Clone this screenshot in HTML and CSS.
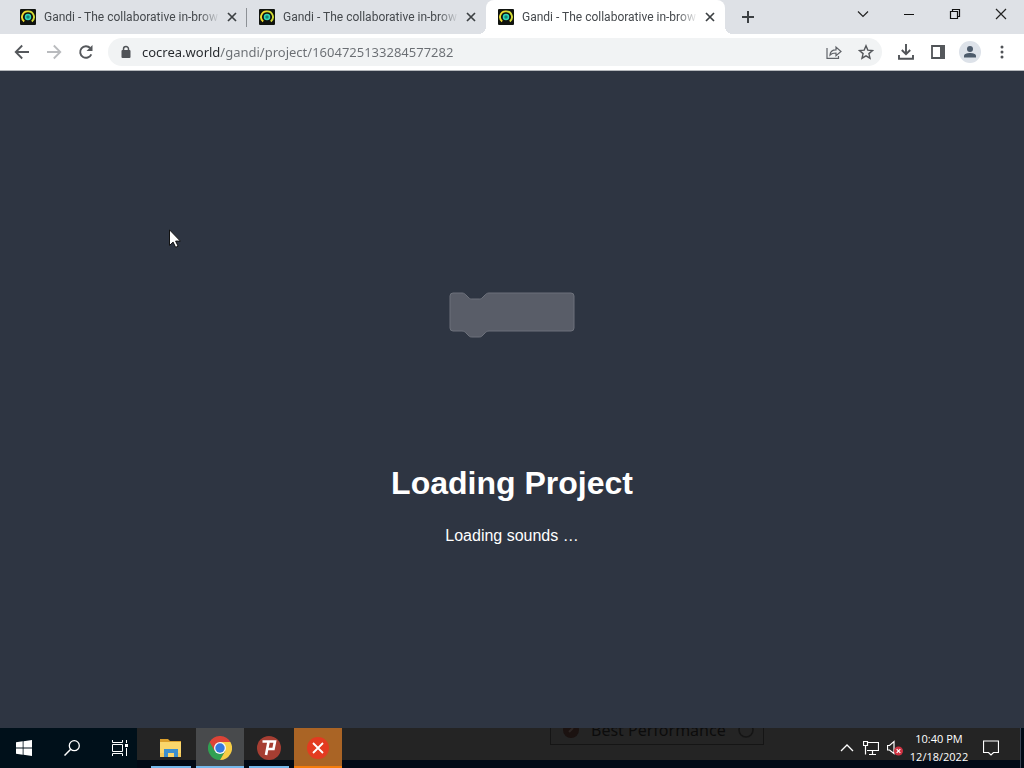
FILE: index.html
```html
<!DOCTYPE html>
<html lang="en">
<head>
<meta charset="utf-8">
<title>Gandi - The collaborative in-browser editor</title>
<link rel="stylesheet" href="styles.css">
</head>
<body>
<svg class="defs" aria-hidden="true">
  <symbol id="gandi" viewBox="0 0 16 16">
    <rect width="16" height="16" rx="1" fill="#10130f"/>
    <path d="M4.200 12.400A5.600 5.600 0 0 1 8 2.400" fill="none" stroke="#f0dc2e" stroke-width="1.900"/>
    <path d="M8 2.400A5.600 5.600 0 0 1 11.800 12.400" fill="none" stroke="#d3dc38" stroke-width="1.900"/>
    <circle cx="8" cy="8" r="2.500" fill="#1a8074" stroke="#2ed8ba" stroke-width="1.500"/>
  </symbol>
  <symbol id="cross" viewBox="0 0 16 16">
    <path d="M4 4l8 8M12 4l-8 8" fill="none" stroke="#3c4043" stroke-width="1.700"/>
  </symbol>
</svg>

<header class="browser">
  <div class="tabstrip">
    <div class="tabs" role="tablist">
      <div class="tab" role="tab">
        <svg class="favicon"><use href="#gandi"/></svg>
        <span class="tab-title">Gandi - The collaborative in-brow</span>
        <button class="tab-close" aria-label="Close tab"><svg><use href="#cross"/></svg></button>
      </div>
      <div class="tab" role="tab">
        <svg class="favicon"><use href="#gandi"/></svg>
        <span class="tab-title">Gandi - The collaborative in-brow</span>
        <button class="tab-close" aria-label="Close tab"><svg><use href="#cross"/></svg></button>
      </div>
      <div class="tab active" role="tab" aria-selected="true">
        <svg class="favicon"><use href="#gandi"/></svg>
        <span class="tab-title">Gandi - The collaborative in-brow</span>
        <button class="tab-close" aria-label="Close tab"><svg><use href="#cross"/></svg></button>
      </div>
    </div>
    <button class="new-tab" aria-label="New tab">
      <svg viewBox="0 0 16 16"><path d="M8 2v12M2 8h12" stroke="#3c4043" stroke-width="2"/></svg>
    </button>
    <div class="window-controls">
      <button aria-label="Search tabs"><svg viewBox="0 0 16 16"><path d="M3 5.500l5 5 5-5" fill="none" stroke="#222" stroke-width="1.200"/></svg></button>
      <button aria-label="Minimize"><svg viewBox="0 0 16 16"><path d="M3 8.500h10" stroke="#111"/></svg></button>
      <button aria-label="Restore"><svg viewBox="0 0 16 16"><path d="M3.500 5.500h7v7h-7zM5.500 5.500v-2h7v7h-2" fill="none" stroke="#111" stroke-width="1.200"/></svg></button>
      <button aria-label="Close"><svg viewBox="0 0 16 16"><path d="M3 3l10 10M13 3L3 13" stroke="#222" stroke-width="1.200"/></svg></button>
    </div>
  </div>

  <div class="toolbar">
    <nav class="nav">
      <button aria-label="Back"><svg viewBox="0 0 16 16"><path d="M15 8H2M8.200 1.500L1.700 8l6.500 6.500" fill="none" stroke="#55585c" stroke-width="1.800"/></svg></button>
      <button aria-label="Forward" disabled><svg viewBox="0 0 16 16"><path d="M1 8h13M7.800 1.500L14.300 8l-6.500 6.500" fill="none" stroke="#b9bbbe" stroke-width="1.800"/></svg></button>
      <button aria-label="Reload"><svg viewBox="0 0 16 16"><path d="M13.300 10.300A5.800 5.800 0 1 1 12.200 4" fill="none" stroke="#55585c" stroke-width="1.900"/><path d="M14.500 1v6H8.500z" fill="#55585c"/></svg></button>
    </nav>
    <div class="omnibox">
      <svg class="lock" viewBox="0 0 16 16"><rect x="3.500" y="6" width="9" height="8" rx="1" fill="#505357"/><path d="M5.500 6.500V5a2.500 2.500 0 0 1 5 0v1.500" fill="none" stroke="#505357" stroke-width="1.500"/></svg>
      <input class="url" type="text" aria-label="Address" value="cocrea.world/gandi/project/1604725133284577282">
      <button aria-label="Share"><svg viewBox="0 0 16 16"><path d="M1 4v10.300h11.500v-2.300M4 11c.2-3.700 2.500-5.200 6-5.200V3l5 4.500-5 4.300V9C7.200 9 5.300 9.500 4 11z" fill="none" stroke="#606368" stroke-width="1.200"/></svg></button>
      <button aria-label="Bookmark"><svg viewBox="0 0 16 16"><path d="M8 1.800l1.800 4.300 4.700.4-3.600 3.100 1.100 4.600L8 11.800l-4 2.400 1.100-4.600L1.500 6.500l4.700-.4z" fill="none" stroke="#55585c" stroke-width="1.400"/></svg></button>
    </div>
    <div class="actions">
      <button aria-label="Downloads"><svg viewBox="0 0 16 16"><path d="M8 0v9.500M3.800 6L8 10.200 12.200 6M1 11v3.800h14V11" fill="none" stroke="#505357" stroke-width="1.900"/></svg></button>
      <button aria-label="Side panel"><svg viewBox="0 0 16 16"><path d="M2 2h12v12H2z" fill="#fff" stroke="#505357" stroke-width="1.800"/><path d="M10 1h5v14h-5z" fill="#55585c"/></svg></button>
      <button class="profile" aria-label="Profile"><svg viewBox="0 0 16 16"><circle cx="8" cy="5" r="3" fill="#4d5b6b"/><path d="M2 13.500v-1.500C2 9.700 5.500 9 8 9s6 .7 6 3v1.500z" fill="#4d5b6b"/></svg></button>
      <button aria-label="Menu"><svg viewBox="0 0 16 16"><g fill="#505357"><circle cx="8" cy="3" r="1.500"/><circle cx="8" cy="8" r="1.500"/><circle cx="8" cy="13" r="1.500"/></g></svg></button>
    </div>
  </div>
</header>

<main class="loader">
  <svg class="block" viewBox="0 0 126 46" aria-hidden="true">
    <path d="M1 4a3 3 0 0 1 3-3h9c2 0 3 1 4 2l3 3c1 1 2 1 3 1h7c1 0 2 0 3-1l3-3c1-1 2-2 4-2h82a3 3 0 0 1 3 3v32a3 3 0 0 1-3 3H40c-2 0-3 1-4 2l-3 3c-1 1-2 1-3 1h-7c-1 0-2 0-3-1l-3-3c-1-1-2-2-4-2H4a3 3 0 0 1-3-3z" fill="#595d68" stroke="#6d717b"/>
  </svg>
  <h1>Loading Project</h1>
  <p>Loading sounds …</p>
</main>

<footer class="taskbar">
  <div class="system">
    <button aria-label="Start"><svg viewBox="0 0 16 16"><path d="M0 2.300l6.700-1v6.300H0zM7.500 1.200L16 0v7.600H7.500zM0 8.400h6.700v6.300l-6.700-1zM7.500 8.400H16V16l-8.500-1.200z" fill="#fff"/></svg></button>
    <button aria-label="Search"><svg viewBox="0 0 16 16"><circle cx="10.300" cy="5.700" r="5" fill="none" stroke="#fff" stroke-width="1.300"/><path d="M6.700 9.300L.5 15.500" stroke="#fff" stroke-width="1.500"/></svg></button>
    <button aria-label="Task view"><svg viewBox="0 0 16 16"><path d="M.5 0v2.500h10V0M.5 16v-2.500h10V16M.5 4.500h10v7H.5zM14.500 0v3M14.500 8v8" fill="none" stroke="#fff"/><path d="M13 4h3v3h-3z" fill="#fff"/></svg></button>
  </div>
  <div class="desk">
    <div class="ghost" aria-hidden="true">
      <svg viewBox="0 0 16 16"><circle cx="8" cy="8" r="8" fill="#1b1210"/><path d="M6 10l4-4" stroke="#2c2523" stroke-width="2"/></svg>
      <span>Best Performance</span>
      <svg viewBox="0 0 16 16"><circle cx="8" cy="8" r="7" fill="none" stroke="#151515" stroke-width="1.500"/></svg>
    </div>
    <div class="apps">
      <button class="app small" aria-label="File Explorer"><svg viewBox="0 0 24 24"><path d="M1 3h8l2 2h11v16H1z" fill="#dca02c"/><path d="M1 6h21v15H1z" fill="#fbd66b"/><path d="M5 13h14v8h-4v-4H9v4H5z" fill="#3c8fce"/><path d="M1 17h4v4H1zM19 17h3v4h-3z" fill="#f3c95b"/></svg></button>
      <button class="app current" aria-label="Google Chrome"><svg viewBox="0 0 24 24"><path d="M12 12l5.200 3L12 24A12 12 0 0 1 1.600 6z" fill="#31a052"/><path d="M12 12V6h10.400A12 12 0 0 1 12 24l5.200-9z" fill="#f7cd45"/><path d="M1.600 6A12 12 0 0 1 22.400 6H12L6.800 15z" fill="#dc4437"/><circle cx="12" cy="12" r="6" fill="#f5f7f8"/><circle cx="12" cy="12" r="4.700" fill="#3479df"/></svg></button>
      <button class="app small" aria-label="Psiphon"><svg viewBox="0 0 24 24"><circle cx="12" cy="12" r="12" fill="#a63e32"/><path d="M5.500 5.500H18l-1.500 7.500H11M11.500 6L9 19" fill="none" stroke="#fff" stroke-width="2.600"/></svg></button>
      <button class="app alert" aria-label="Alert"><svg viewBox="0 0 24 24"><circle cx="12" cy="12" r="11" fill="#e33b20"/><path d="M7 7l10 10M17 7L7 17" stroke="#fff" stroke-width="1.800"/></svg></button>
    </div>
    <div class="tray">
      <button aria-label="Show hidden icons"><svg viewBox="0 0 16 16"><path d="M2 11l6-6 6 6" fill="none" stroke="#fff" stroke-width="1.300"/></svg></button>
      <button aria-label="Network"><svg viewBox="0 0 16 16"><path d="M4 2.500h11.500v8H4M2.500 5v9.500M9.500 10.500v4M6 14.500h7M.5 1.500h4v4h-4z" fill="none" stroke="#fff" stroke-width="1.200"/></svg></button>
      <button aria-label="Sound muted"><svg viewBox="0 0 16 16"><path d="M.5 5.500h2L7 1.500v12l-4.500-3.500h-2z" fill="none" stroke="#fff" stroke-width="1.200"/><circle cx="11.500" cy="11" r="4.500" fill="#cf3342"/><path d="M9.700 9.200l3.600 3.600M13.300 9.200l-3.600 3.600" stroke="#fff" stroke-width="1.200"/></svg></button>
      <time class="clock" datetime="2022-12-18T22:40"><span>10:40 PM</span><span>12/18/2022</span></time>
      <button class="notes" aria-label="Notifications"><svg viewBox="0 0 16 16"><path d="M.5 1h15v11.500h-5L8 15l-2.500-2.500h-5z" fill="none" stroke="#fff" stroke-width="1.200"/></svg></button>
    </div>
  </div>
</footer>

<svg class="pointer" viewBox="0 0 12 19" aria-hidden="true">
  <path d="M.5.8v15.700l3.600-3.400 2.500 5.200 2.500-1.100-2.500-5.100h4.800z" fill="#fff" stroke="#111" stroke-width="1"/>
</svg>
</body>
</html>
```
FILE: styles.css
```css
* {
  box-sizing: border-box;
}

body {
  margin: 0;
  min-height: 100vh;
  display: flex;
  flex-direction: column;
  background: #2e3542;
  font-family: "Noto Sans", "Open Sans", sans-serif;
}

button {
  display: flex;
  align-items: center;
  justify-content: center;
  flex: none;
  padding: 0;
  border: 0;
  background: none;
}

svg {
  display: block;
  flex: none;
  width: 16px;
  height: 16px;
}

.defs {
  position: absolute;
  width: 0;
  height: 0;
}

/* Tab strip */
.tabstrip {
  display: flex;
  height: 34px;
  padding-left: 8px;
  background: #dee1e6;
}

.tabs {
  display: flex;
  flex: 0 1 717px;
  min-width: 0;
}

.tab {
  position: relative;
  display: flex;
  flex: 1 1 0;
  min-width: 0;
  align-items: center;
  padding: 0 3px 0 12px;
}

.tab:first-child::after {
  content: "";
  position: absolute;
  right: 0;
  top: 8px;
  width: 1px;
  height: 19px;
  background: #8d9196;
}

.tab.active {
  border-radius: 8px 8px 0 0;
  background: #fff;
}

.tab.active::before,
.tab.active::after {
  content: "";
  position: absolute;
  bottom: 0;
  width: 8px;
  height: 8px;
}

.tab.active::before {
  right: 100%;
  background: radial-gradient(circle at 0 0, transparent 8px, #fff 8px);
}

.tab.active::after {
  left: 100%;
  background: radial-gradient(circle at 100% 0, transparent 8px, #fff 8px);
}

.tab-title {
  flex: 1;
  min-width: 0;
  margin-left: 8px;
  overflow: hidden;
  white-space: nowrap;
  font-family: Roboto, "Noto Sans", sans-serif;
  font-size: 12px;
  line-height: 18px;
  color: #45494d;
  mask-image: linear-gradient(to right, #000 88%, transparent);
}

.tab-close {
  width: 24px;
  height: 24px;
}

.new-tab {
  width: 28px;
  margin-left: 9px;
}

.window-controls {
  display: flex;
  height: 28px;
  margin-left: auto;
}

.window-controls button {
  width: 46px;
}

/* Toolbar */
.toolbar {
  display: flex;
  align-items: center;
  height: 37px;
  padding: 0 6px;
  border-bottom: 1px solid #b5b8bc;
  background: #fff;
}

.nav,
.actions {
  display: flex;
}

.nav button,
.actions button {
  width: 32px;
  height: 28px;
}

.omnibox {
  display: flex;
  flex: 1;
  min-width: 0;
  height: 28px;
  align-items: center;
  margin: 0 8px 0 6px;
  padding-left: 10px;
  border-radius: 14px;
  background: #f1f3f4;
}

.omnibox button {
  width: 32px;
  height: 28px;
}

.url {
  flex: 1;
  min-width: 0;
  margin-left: 8px;
  padding: 0;
  border: 0;
  outline: 0;
  background: linear-gradient(to right, #25282c 78px, #6a6e73 78px);
  background-clip: text;
  color: transparent;
  font-family: inherit;
  font-size: 13px;
  line-height: 20px;
}

.actions .profile {
  width: 22px;
  height: 22px;
  margin: 3px 5px;
  border-radius: 50%;
  background: #dde2e9;
}

/* Loading screen */
.loader {
  display: flex;
  flex: 1;
  flex-direction: column;
  align-items: center;
  justify-content: center;
  padding-top: 38px;
  color: #fff;
  font-family: "Liberation Sans", Arial, sans-serif;
  cursor: default;
}

.block {
  width: 126px;
  height: 46px;
}

.loader h1 {
  margin: 125px 0 23px;
  font-size: 32px;
  line-height: 40px;
}

.loader p {
  margin: 0;
  font-size: 16px;
  line-height: 20px;
}

/* Taskbar */
.taskbar {
  display: flex;
  height: 40px;
  background: #000b16;
}

.system {
  display: flex;
  width: 137px;
  background: #00101a;
}

.system button {
  width: 48px;
}

.desk {
  position: relative;
  display: flex;
  flex: 1;
  min-width: 0;
  margin-right: 3px;
  padding-right: 5px;
  border-right: 1px solid #3a4554;
  background: linear-gradient(#242424 32px, #020a16 32px);
}

.apps {
  display: flex;
  gap: 1px;
  padding-left: 10px;
}

.app {
  position: relative;
  width: 48px;
}

.app svg {
  width: 24px;
  height: 24px;
}

.app::after {
  content: "";
  position: absolute;
  inset: auto 0 0;
  height: 2px;
  background: #76b9ed;
}

.app.small::after {
  left: 4px;
  right: 4px;
}

.app.current {
  background: #484a4c;
}

.app.alert {
  background: #aa6425;
}

.app.alert::after {
  background: #f57c0c;
}

.ghost {
  position: absolute;
  left: 413px;
  top: 0;
  display: flex;
  align-items: flex-end;
  gap: 12px;
  width: 214px;
  height: 17px;
  padding: 0 10px 6px 12px;
  overflow: hidden;
  border: 1px solid #151515;
  border-top: 0;
  color: #0c0c0c;
  font-size: 16px;
  line-height: 16px;
  white-space: nowrap;
}

.ghost span {
  flex: 1;
}

.tray {
  display: flex;
  align-items: center;
  margin-left: auto;
  color: #fff;
}

.tray button {
  width: 24px;
  height: 40px;
}

.clock {
  display: flex;
  flex-direction: column;
  width: 64px;
  text-align: center;
  font-family: "Open Sans", "Noto Sans", sans-serif;
  font-size: 11px;
  line-height: 18px;
}

.tray .notes {
  width: 44px;
  padding-right: 16px;
  justify-content: flex-end;
}

/* Pointer */
.pointer {
  position: absolute;
  left: 169px;
  top: 229px;
  width: 12px;
  height: 19px;
}
```
